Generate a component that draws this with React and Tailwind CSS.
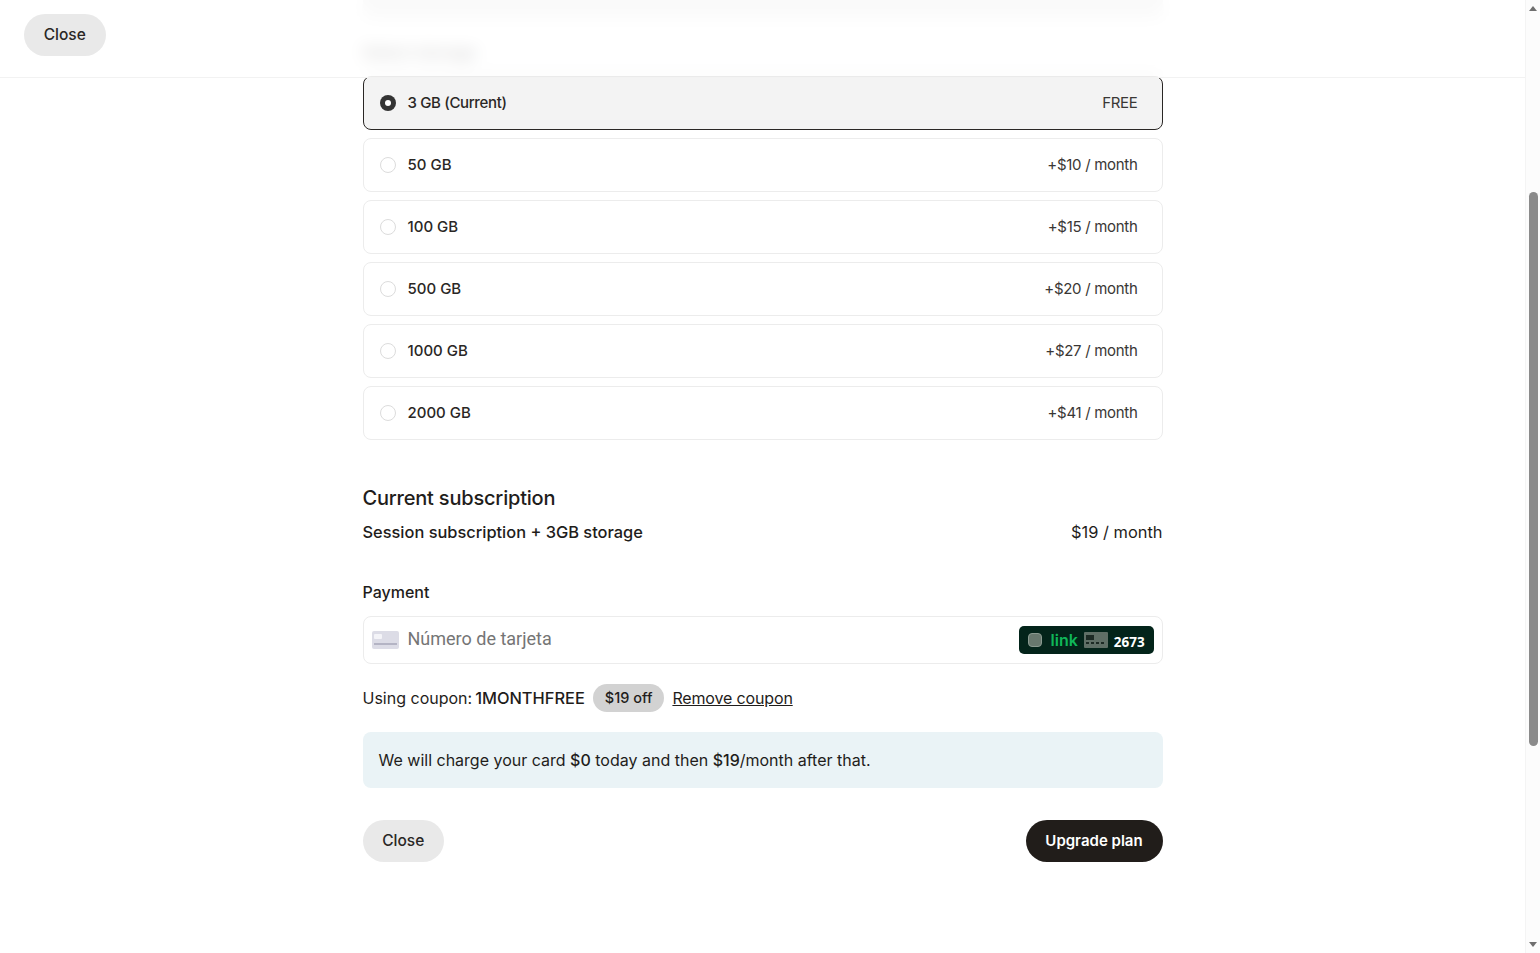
import React from 'react';

const plans = [
    { name: '3 GB (Current)', price: 'FREE', selected: true },
    { name: '50 GB', price: '+$10 / month' },
    { name: '100 GB', price: '+$15 / month' },
    { name: '500 GB', price: '+$20 / month' },
    { name: '1000 GB', price: '+$27 / month' },
    { name: '2000 GB', price: '+$41 / month' },
];

function CloseButton() {
    return (
        <button type="button" className="h-[42px] w-[81.5px] rounded-full bg-[#e9e9e9] text-[15.5px] font-medium text-[#2a2725]">
            Close
        </button>
    );
}

function PlanRow({ name, price, selected }) {
    return (
        <div
            className={`flex h-[54px] items-center justify-between rounded-lg border pl-[16px] pr-[24px] text-[15px] ${
                selected ? 'border-[#2a2725] bg-[#f3f3f3]' : 'border-[#ececec] bg-white'
            }`}
        >
            <div className="flex items-center gap-[12px]">
                {selected ? (
                    <span className="flex h-4 w-4 items-center justify-center rounded-full bg-[#333]">
                        <span className="h-[6px] w-[6px] rounded-full bg-white" />
                    </span>
                ) : (
                    <span className="h-4 w-4 rounded-full border border-[#dcdcdc] bg-white" />
                )}
                <span className={`font-medium text-[#2a2725] ${selected ? 'tracking-[-0.35px]' : ''}`}>{name}</span>
            </div>
            <span className="tracking-[-0.3px] text-[#3a3735]">{price}</span>
        </div>
    );
}

function CardIcon() {
    return (
        <svg width="27" height="18" viewBox="0 0 27 18" className="shrink-0">
            <rect width="27" height="18" rx="2" fill="#dcdce6" />
            <rect x="2" y="3" width="8" height="5" rx="1" fill="#f4f4f8" />
            <rect x="2" y="12" width="23" height="2" fill="#b4b4c4" />
        </svg>
    );
}

function LinkBadge() {
    return (
        <div className="flex h-[28px] w-[135px] items-center rounded-[5px] bg-[#03241a] pl-[9px] text-white">
            <span className="h-[14px] w-[14px] rounded-[4px] border border-[#8a9a90] bg-[#68786e]" />
            <span className="ml-[9px] text-[16px] font-semibold leading-none text-[#10b759]">link</span>
            <svg width="24" height="16" viewBox="0 0 24 16" className="ml-[6px]">
                <rect width="24" height="16" rx="1" fill="#5f6f66" />
                <rect x="2" y="3" width="8" height="5" fill="#1c2a24" />
                <rect x="2" y="10" width="3" height="2" fill="#1c2a24" />
                <rect x="7" y="10" width="3" height="2" fill="#1c2a24" />
                <rect x="12" y="10" width="3" height="2" fill="#1c2a24" />
                <rect x="17" y="10" width="3" height="2" fill="#1c2a24" />
            </svg>
            <span className="ml-[6px] mt-[4px] font-['Open_Sans',sans-serif] text-[13.5px] font-bold">2673</span>
        </div>
    );
}

export default function App() {
    return (
        <div className="flex h-[953px] overflow-hidden bg-white font-['Inter',sans-serif] text-[#1f1d1b]">
            <div className="relative min-w-0 flex-1 overflow-hidden">
                {/* Sticky header over the scrolled content */}
                <div className="absolute inset-x-0 top-0 z-10 flex h-[78px] items-start border-b border-[#f2f2f2] bg-white/80 pl-[24px] pt-[14px] backdrop-blur-sm">
                    <CloseButton />
                </div>

                <div className="mx-auto w-[800px]">
                    <div className="h-[18px] rounded-b-lg bg-[#e4e4e4]" />
                    <p className="mt-[24px] h-[21px] text-[16.5px] font-medium leading-[21px]">Select storage</p>

                    <div className="mt-[13px] flex flex-col gap-2">
                        {plans.map((plan) => (
                            <PlanRow key={plan.name} {...plan} />
                        ))}
                    </div>

                    <h2 className="mt-[44px] text-[20px] font-medium leading-[28px] tracking-[-0.2px]">Current subscription</h2>
                    <div className="mt-[8px] flex items-center justify-between text-[16.4px] leading-[24px]">
                        <span className="font-medium">Session subscription + 3GB storage</span>
                        <span>$19 / month</span>
                    </div>

                    <p className="mt-[36px] text-[16px] font-medium leading-[24px]">Payment</p>
                    <div className="mt-[12px] flex h-[48px] items-center justify-between rounded-lg border border-[#ececec] pl-[8px] pr-[8px]">
                        <div className="flex items-center gap-[9px]">
                            <CardIcon />
                            <span className="pb-[4px] font-['Roboto',sans-serif] text-[18px] text-[#757575]">Número de tarjeta</span>
                        </div>
                        <LinkBadge />
                    </div>

                    <div className="mt-[20px] flex h-[28px] items-center text-[16px]">
                        <span>Using coupon:</span>
                        <span className="ml-[3px] text-[16.4px] font-medium">1MONTHFREE</span>
                        <span className="ml-[8px] flex h-[28px] items-center rounded-full bg-[#d2d2d2] px-[12px] text-[14.5px] font-medium">$19 off</span>
                        <span className="ml-[8px] tracking-[-0.15px] underline">Remove coupon</span>
                    </div>

                    <div className="mt-[20px] flex h-[56px] items-center rounded-lg bg-[#eaf3f6] px-4 text-[16px]">
                        <p>
                            We will charge your card <span className="font-medium">$0</span> today and then{' '}
                            <span className="font-medium">$19</span>/month after that.
                        </p>
                    </div>

                    <div className="mt-[32px] flex items-center justify-between">
                        <CloseButton />
                        <button type="button" className="h-[42px] w-[137px] rounded-full bg-[#211d1a] text-[15px] font-semibold text-white">
                            Upgrade plan
                        </button>
                    </div>
                </div>
            </div>

            {/* Browser scrollbar */}
            <div className="flex w-[15px] shrink-0 flex-col items-center border-l border-[#f4f4f4] bg-[#fcfcfc]">
                <span className="mt-[6px] h-0 w-0 border-x-[4px] border-b-[5px] border-x-transparent border-b-[#6f6f6f]" />
                <span className="mt-[181px] h-[554px] w-[9px] rounded-full bg-[#8b8b8b]" />
                <span className="mt-auto mb-[6px] h-0 w-0 border-x-[4px] border-t-[5px] border-x-transparent border-t-[#6f6f6f]" />
            </div>
        </div>
    );
}
